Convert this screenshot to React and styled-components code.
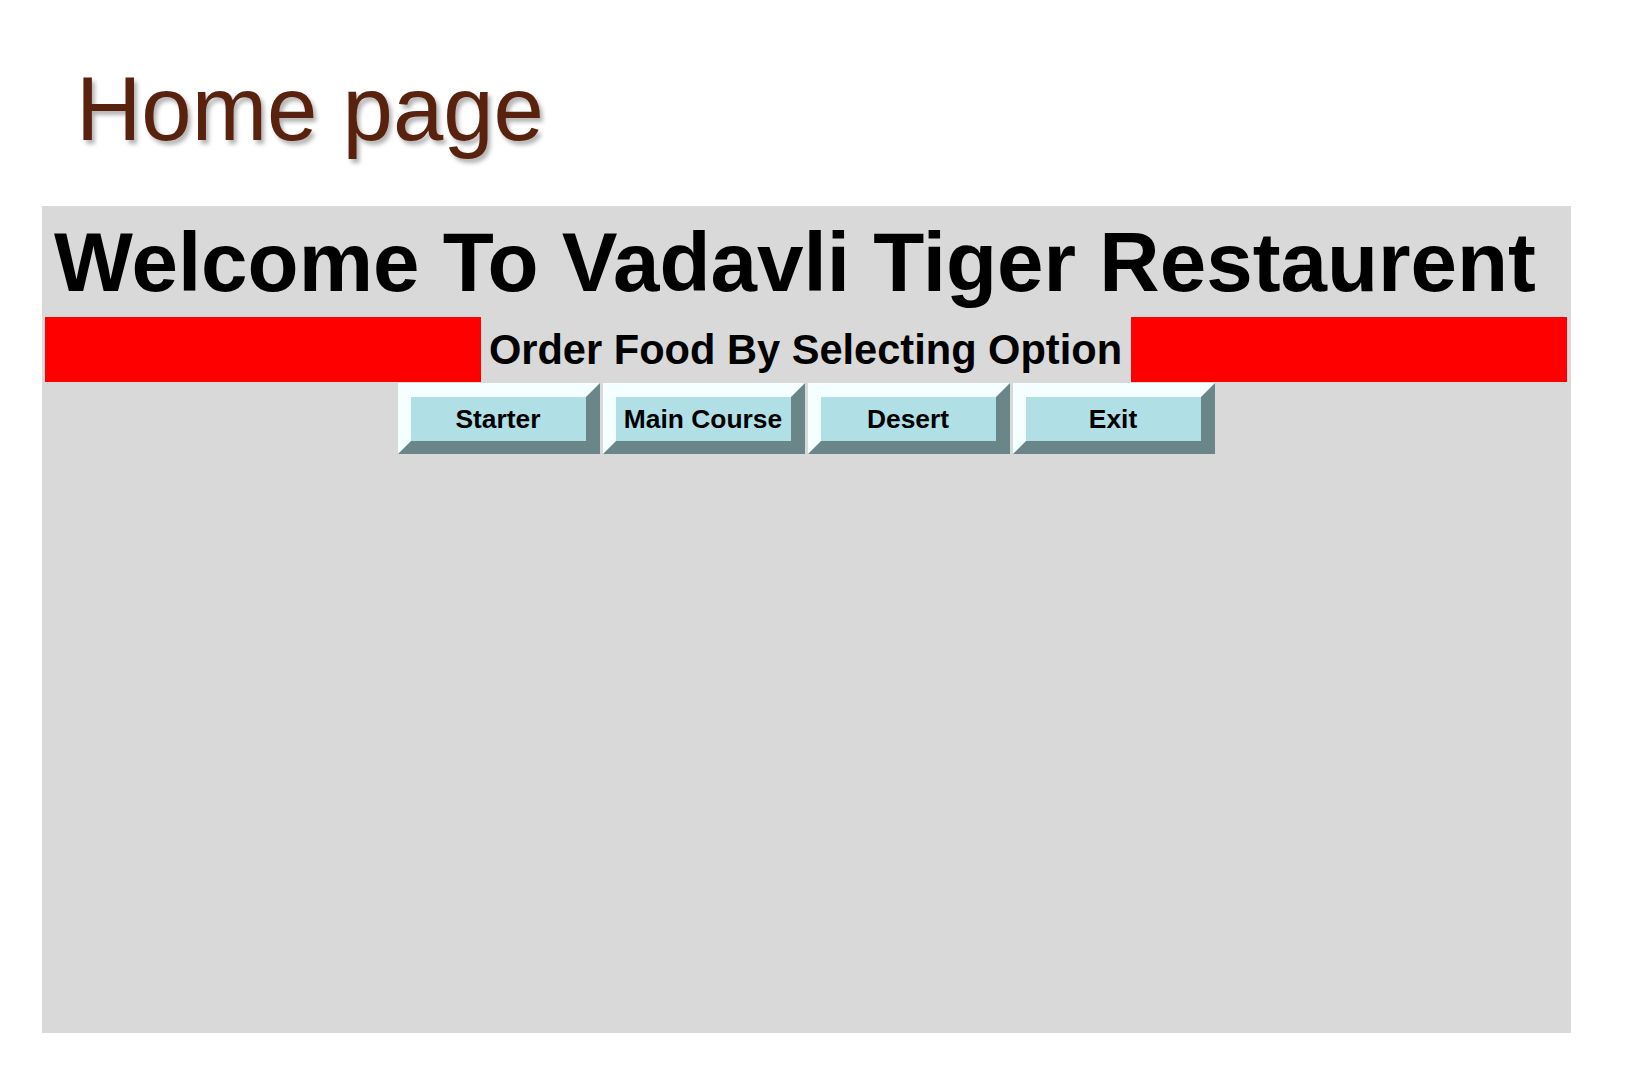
import React from "react";
import styled, { createGlobalStyle } from "styled-components";

const GlobalStyle = createGlobalStyle`
  html, body {
    margin: 0;
    padding: 0;
    background: #ffffff;
  }
  body {
    font-family: "Liberation Sans", Arial, sans-serif;
  }
`;

const menu = ["Starter", "Main Course", "Desert", "Exit"];

export default function App() {
  return (
    <>
      <GlobalStyle />
      <Page>
        <Title>Home page</Title>
        <Panel>
          <Welcome>Welcome To Vadavli Tiger Restaurent</Welcome>
          <Banner>
            <RedBar />
            <BannerText>Order Food By Selecting Option</BannerText>
            <RedBar />
          </Banner>
          <Menu>
            {menu.map((item) => (
              <MenuButton key={item}>{item}</MenuButton>
            ))}
          </Menu>
        </Panel>
      </Page>
    </>
  );
}

const Page = styled.div`
  width: 1631px;
  min-height: 1073px;
  display: flex;
  flex-direction: column;
  font-family: "Liberation Sans", Arial, sans-serif;
`;

const Title = styled.h1`
  margin: 0;
  padding: 57px 0 0 76px;
  font-size: 90.5px;
  line-height: 104px;
  font-weight: 400;
  color: #58220f;
  text-shadow: 3px 4px 4px rgba(0, 0, 0, 0.3);
`;

const Panel = styled.div`
  margin: 45px 0 0 42px;
  width: 1529px;
  height: 827px;
  box-sizing: border-box;
  padding: 0 4px 0 3px;
  background-color: #d9d9d9;
  display: flex;
  flex-direction: column;
`;

const Welcome = styled.h2`
  margin: 8px 0 0 9px;
  font-size: 83.6px;
  line-height: 96px;
  font-weight: 700;
  color: #000;
  white-space: nowrap;
`;

const Banner = styled.div`
  margin-top: 7px;
  height: 65px;
  display: flex;
  align-items: center;
`;

const RedBar = styled.div`
  flex: 1;
  align-self: stretch;
  background-color: #ff0000;
`;

const BannerText = styled.div`
  padding: 0 9px 0 8px;
  font-size: 41.6px;
  line-height: 46px;
  font-weight: 700;
  color: #000;
  white-space: nowrap;
`;

const Menu = styled.div`
  margin-top: 1px;
  display: flex;
  justify-content: center;
  gap: 3px;
`;

const MenuButton = styled.button`
  width: 202px;
  height: 71px;
  box-sizing: border-box;
  padding: 0;
  border-style: solid;
  border-width: 14px 14px 13px 13px;
  border-color: #f5ffff #6b8689 #6b8689 #f5ffff;
  background-color: #b0e0e6;
  font-family: "Liberation Sans", Arial, sans-serif;
  font-size: 26.4px;
  font-weight: 700;
  color: #000;
  cursor: pointer;
`;
